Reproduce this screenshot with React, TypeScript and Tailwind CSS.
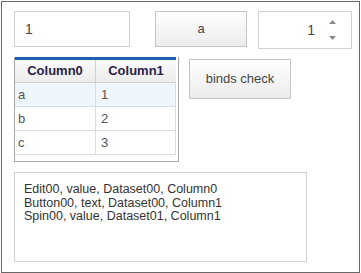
import React from "react";

const font = { fontFamily: '"Liberation Sans", "DejaVu Sans", Arial, sans-serif' };

export default function App() {
  return (
    <div className="w-[361px] h-[273px] bg-white" style={font}>
      <div className="ml-[1px] pt-[1px] w-[360px]">
        <div className="w-[359px] h-[272px] border border-[#686868] pl-[12px] pt-[9px] flex flex-col">
          {/* Row 1 */}
          <div className="flex items-start">
            <div className="w-[116px] h-[36px] border border-[#d2d2d2] flex items-center pl-[10px] text-[14px] text-[#444]">
              1
            </div>
            <div className="ml-[25px] w-[92px] h-[36px] border border-[#c4c4c4] bg-gradient-to-b from-white to-[#ececec] flex items-center justify-center text-[13px] text-[#444]">
              a
            </div>
            <div className="ml-[11px] w-[94px] h-[38px] border border-[#d2d2d2] flex items-center">
              <div className="flex-1 text-right text-[14px] text-[#444] pr-[6px]">1</div>
              <div className="w-[30px] h-full flex flex-col items-center justify-between pt-[8px] pb-[8px] pr-[8px]">
                <svg width="7" height="4" viewBox="0 0 7 4"><polygon points="3.5,0 7,4 0,4" fill="#8a8a8a" /></svg>
                <svg width="7" height="4" viewBox="0 0 7 4"><polygon points="0,0 7,0 3.5,4" fill="#8a8a8a" /></svg>
              </div>
            </div>
          </div>
          {/* Row 2 */}
          <div className="flex items-start mt-[8px]">
            <div className="w-[165px] h-[105px] border border-[#a6a6a6] border-t-0 relative">
              <div className="w-[161px] border-t-[3px] border-[#1b5fae]">
                <div className="flex h-[23px] bg-gradient-to-b from-[#fafafa] to-[#ececec] border-b border-[#d0d0d0] text-[13px] font-bold text-[#2b1f48]">
                  <div className="w-[81px] flex items-center justify-center border-r border-[#d0d0d0]">Column0</div>
                  <div className="flex-1 flex items-center justify-center">Column1</div>
                </div>
                {[
                  ["a", "1", true],
                  ["b", "2", false],
                  ["c", "3", false],
                ].map(([c0, c1, sel]) => (
                  <div
                    key={c0 as string}
                    className={`flex h-[24px] border-b border-r border-[#dcdcdc] text-[13px] text-[#555] ${sel ? "bg-[#eef6fc]" : "bg-white"}`}
                  >
                    <div className="w-[81px] flex items-center pl-[3px] border-r border-[#dcdcdc]">{c0}</div>
                    <div className="flex-1 flex items-center pl-[5px]">{c1}</div>
                  </div>
                ))}
              </div>
            </div>
            <div className="ml-[10px] mt-[2px] w-[102px] h-[40px] border border-[#c4c4c4] bg-gradient-to-b from-white to-[#ececec] flex items-center justify-center text-[13px] text-[#444]">
              binds check
            </div>
          </div>
          {/* Row 3 */}
          <div className="mt-[10px] w-[293px] h-[90px] border border-[#d2d2d2] pl-[9px] pt-[10px] text-[12.5px] leading-[13.5px] text-[#333]">
            <div>Edit00, value, Dataset00, Column0</div>
            <div>Button00, text, Dataset00, Column1</div>
            <div>Spin00, value, Dataset01, Column1</div>
          </div>
        </div>
      </div>
    </div>
  );
}
